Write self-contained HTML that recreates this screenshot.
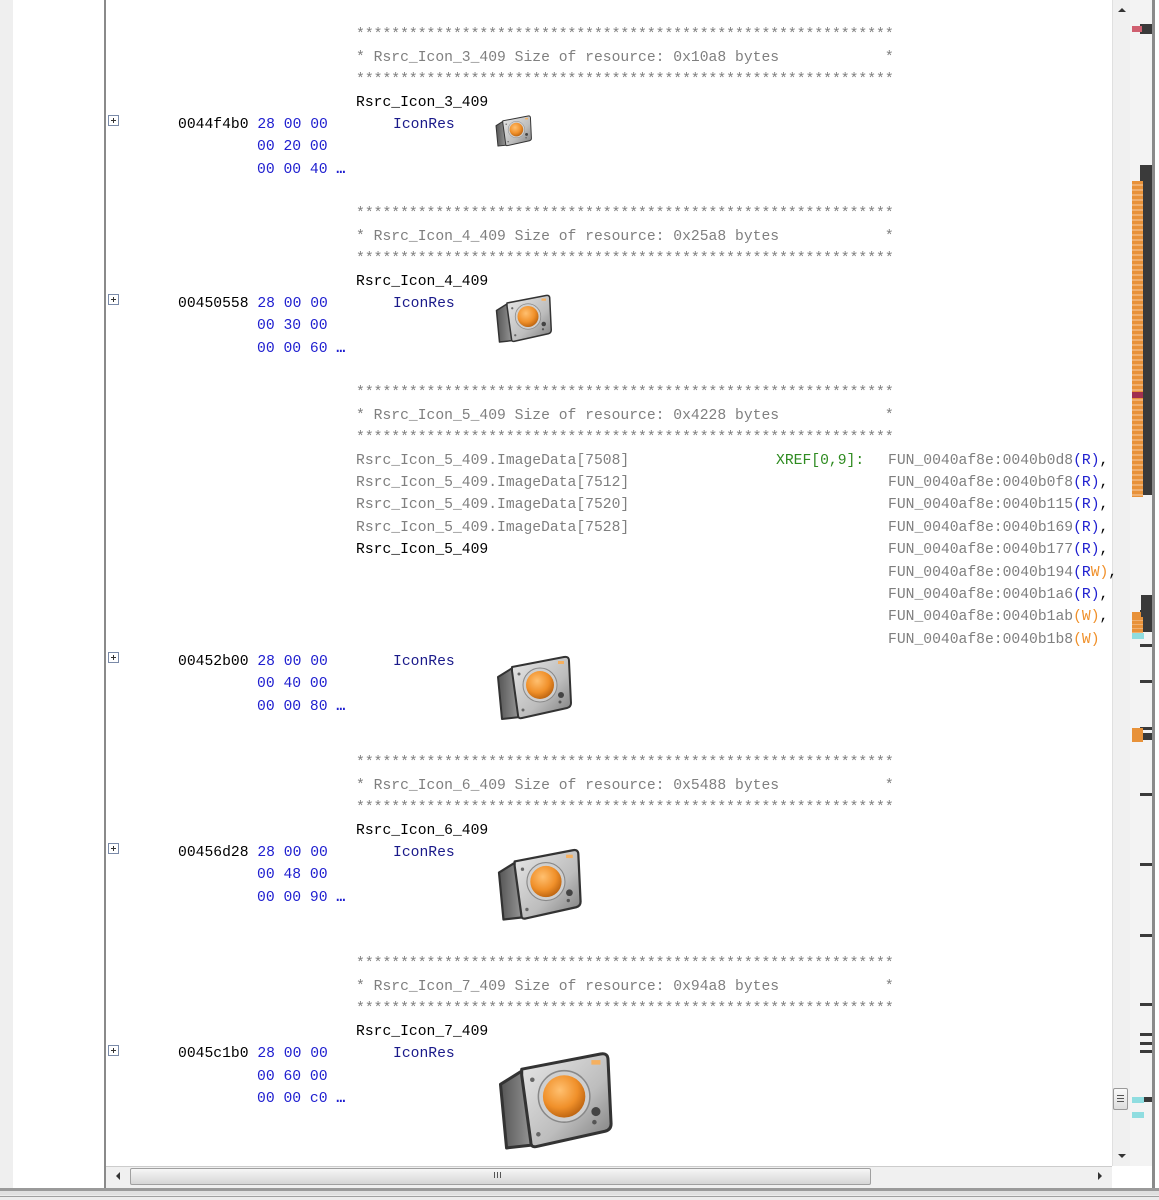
<!DOCTYPE html>
<html><head><meta charset="utf-8">
<style>
html,body{margin:0;padding:0;}
body{width:1159px;height:1200px;position:relative;overflow:hidden;background:#fff;font-family:"Liberation Mono",monospace;font-size:14.7px;}
.a{position:absolute;white-space:pre;line-height:18px;height:18px;margin-top:2px;}
.c{color:#7f7f7f}.k{color:#000}.b{color:#2020d0}.n{color:#1a1a8a}.g{color:#2e8b20}.r{color:#2020d0}.w{color:#f0902a}
.box{position:absolute;left:108px;width:9px;height:9px;border:1px solid #7a8aa8;background:#fff;}
.box:before{content:"";position:absolute;left:2px;top:4px;width:5px;height:1px;background:#333}
.box:after{content:"";position:absolute;left:4px;top:2px;width:1px;height:5px;background:#333}
.m{position:absolute;}
</style></head><body>
<svg width="0" height="0" style="position:absolute">
<defs>
<linearGradient id="bd" x1="0" y1="0" x2="1" y2="1"><stop offset="0" stop-color="#e8e8e8"/><stop offset="0.6" stop-color="#bdbdbd"/><stop offset="1" stop-color="#7a7a7a"/></linearGradient>
<linearGradient id="sd" x1="0" y1="0" x2="1" y2="0"><stop offset="0" stop-color="#555"/><stop offset="1" stop-color="#9a9a9a"/></linearGradient>
<radialGradient id="or" cx="0.4" cy="0.35" r="0.7"><stop offset="0" stop-color="#ffc070"/><stop offset="0.6" stop-color="#f0902a"/><stop offset="1" stop-color="#b8600e"/></radialGradient>
<symbol id="spk" viewBox="0 0 80 68">
<path d="M6 22 L22 12 L28 62 L10 64 Z" fill="url(#sd)" stroke="#333" stroke-width="2" stroke-linejoin="round"/>
<path d="M20 12 L72 2 Q77 1 77 6 L79 48 Q79 52 75 53 L30 63 Q26 64 26 60 L20 16 Z" fill="url(#bd)" stroke="#333" stroke-width="2" stroke-linejoin="round"/>
<circle cx="48" cy="30" r="17" fill="#cfcfcf" stroke="#888" stroke-width="1"/>
<circle cx="48" cy="30" r="14" fill="url(#or)"/>
<circle cx="69" cy="40" r="3" fill="#444"/>
<circle cx="68" cy="47" r="1.5" fill="#555"/>
<circle cx="27" cy="19" r="1.5" fill="#666"/>
<circle cx="31" cy="55" r="1.5" fill="#666"/>
<rect x="66" y="6" width="6" height="3" fill="#f5b060"/>
</symbol>
</defs></svg>

<!-- frame -->
<div class="m" style="left:0;top:0;width:13px;height:1188px;background:#efefef"></div>
<div class="m" style="left:104px;top:0;width:2px;height:1190px;background:#8a8a8a"></div>
<div class="m" style="left:1112px;top:0;width:18px;height:1166px;background:#f0f0f0;border-left:1px solid #e0e0e0"></div>
<div class="m" style="left:1118px;top:8px;width:0;height:0;border-left:4px solid transparent;border-right:4px solid transparent;border-bottom:4px solid #333"></div>
<div class="m" style="left:1118px;top:1154px;width:0;height:0;border-left:4px solid transparent;border-right:4px solid transparent;border-top:4px solid #333"></div>
<div class="m" style="left:1113px;top:1088px;width:15px;height:22px;background:linear-gradient(#fafafa,#ddd);border:1px solid #999;border-radius:2px;box-sizing:border-box"></div>
<div class="m" style="left:1117px;top:1095px;width:7px;height:1px;background:#555;box-shadow:0 3px #555,0 6px #555"></div>
<div class="m" style="left:1130px;top:0;width:22px;height:1166px;background:#f3f3f3"></div>
<div class="m" style="left:1152px;top:0;width:3px;height:1190px;background:#8a8a8a"></div>
<div class="m" style="left:1155px;top:0;width:4px;height:1190px;background:#fff"></div>
<!-- overview markers -->
<div class="m" style="left:1140px;top:24px;width:12px;height:10px;background:#3a3a3a"></div>
<div class="m" style="left:1132px;top:26px;width:10px;height:6px;background:#d06070"></div>
<div class="m" style="left:1140px;top:165px;width:12px;height:330px;background:#3a3a3a"></div>
<div class="m" style="left:1132px;top:181px;width:11px;height:316px;background:repeating-linear-gradient(#e8923a 0 3px,#f0b070 3px 5px)"></div>
<div class="m" style="left:1132px;top:392px;width:11px;height:6px;background:#a03050"></div>
<div class="m" style="left:1140px;top:610px;width:12px;height:4px;background:#3a3a3a"></div>
<div class="m" style="left:1132px;top:612px;width:11px;height:6px;background:#e8923a"></div>
<div class="m" style="left:1141px;top:595px;width:11px;height:37px;background:#3a3a3a"></div>
<div class="m" style="left:1132px;top:617px;width:11px;height:16px;background:repeating-linear-gradient(#e8923a 0 3px,#f0b070 3px 4px)"></div>
<div class="m" style="left:1132px;top:633px;width:12px;height:6px;background:#8fdde0"></div>
<div class="m" style="left:1140px;top:644px;width:12px;height:3px;background:#3a3a3a"></div>
<div class="m" style="left:1140px;top:680px;width:12px;height:3px;background:#3a3a3a"></div>
<div class="m" style="left:1140px;top:727px;width:12px;height:3px;background:#3a3a3a"></div>
<div class="m" style="left:1140px;top:733px;width:12px;height:7px;background:#3a3a3a"></div>
<div class="m" style="left:1132px;top:728px;width:11px;height:14px;background:#e8923a"></div>
<div class="m" style="left:1140px;top:793px;width:12px;height:3px;background:#3a3a3a"></div>
<div class="m" style="left:1140px;top:863px;width:12px;height:3px;background:#3a3a3a"></div>
<div class="m" style="left:1140px;top:934px;width:12px;height:3px;background:#3a3a3a"></div>
<div class="m" style="left:1140px;top:1003px;width:12px;height:3px;background:#3a3a3a"></div>
<div class="m" style="left:1140px;top:1033px;width:12px;height:3px;background:#3a3a3a"></div>
<div class="m" style="left:1140px;top:1042px;width:12px;height:3px;background:#3a3a3a"></div>
<div class="m" style="left:1140px;top:1050px;width:12px;height:3px;background:#3a3a3a"></div>
<div class="m" style="left:1132px;top:1097px;width:12px;height:6px;background:#8fdde0"></div>
<div class="m" style="left:1144px;top:1097px;width:8px;height:5px;background:#3a3a3a"></div>
<div class="m" style="left:1132px;top:1112px;width:12px;height:6px;background:#8fdde0"></div>
<!-- horizontal scrollbar -->
<div class="m" style="left:106px;top:1166px;width:1006px;height:22px;background:#f0f0f0;border-top:1px solid #ccc"></div>
<div class="m" style="left:116px;top:1172px;width:0;height:0;border-top:4px solid transparent;border-bottom:4px solid transparent;border-right:4px solid #333"></div>
<div class="m" style="left:1098px;top:1172px;width:0;height:0;border-top:4px solid transparent;border-bottom:4px solid transparent;border-left:4px solid #333"></div>
<div class="m" style="left:130px;top:1168px;width:741px;height:17px;background:linear-gradient(#f6f6f6,#d6d6d6);border:1px solid #a0a0a0;border-radius:2px;box-sizing:border-box"></div>
<div class="m" style="left:494px;top:1172px;width:1px;height:6px;background:#555;box-shadow:3px 0 #555,6px 0 #555"></div>
<div class="m" style="left:0;top:1188px;width:1159px;height:3px;background:#9a9a9a"></div>
<div class="m" style="left:0;top:1191px;width:1159px;height:9px;background:#ececec;border-top:4px solid #e0e0e0;box-sizing:border-box"></div>
<div class="m" style="left:0;top:1196px;width:1159px;height:1px;background:#a0a0a0"></div>

<!-- block 3 -->
<div class="a c" style="left:356px;top:24px">*************************************************************</div>
<div class="a c" style="left:356px;top:47px">* Rsrc_Icon_3_409 Size of resource: 0x10a8 bytes            *</div>
<div class="a c" style="left:356px;top:69px">*************************************************************</div>
<div class="a k" style="left:356px;top:92px">Rsrc_Icon_3_409</div>
<div class="box" style="top:115px"></div>
<div class="a k" style="left:178px;top:114px">0044f4b0 <span class="b">28 00 00</span></div>
<div class="a n" style="left:393px;top:114px">IconRes</div>
<div class="a b" style="left:257px;top:136px">00 20 00</div>
<div class="a b" style="left:257px;top:159px">00 00 40 <b>…</b></div>
<svg class="m" style="left:493px;top:115px" width="39" height="33"><use href="#spk"/></svg>

<!-- block 4 -->
<div class="a c" style="left:356px;top:203px">*************************************************************</div>
<div class="a c" style="left:356px;top:226px">* Rsrc_Icon_4_409 Size of resource: 0x25a8 bytes            *</div>
<div class="a c" style="left:356px;top:248px">*************************************************************</div>
<div class="a k" style="left:356px;top:271px">Rsrc_Icon_4_409</div>
<div class="box" style="top:294px"></div>
<div class="a k" style="left:178px;top:293px">00450558 <span class="b">28 00 00</span></div>
<div class="a n" style="left:393px;top:293px">IconRes</div>
<div class="a b" style="left:257px;top:315px">00 30 00</div>
<div class="a b" style="left:257px;top:338px">00 00 60 <b>…</b></div>
<svg class="m" style="left:492px;top:294px" width="60" height="51"><use href="#spk"/></svg>

<!-- block 5 -->
<div class="a c" style="left:356px;top:382px">*************************************************************</div>
<div class="a c" style="left:356px;top:405px">* Rsrc_Icon_5_409 Size of resource: 0x4228 bytes            *</div>
<div class="a c" style="left:356px;top:427px">*************************************************************</div>
<div class="a c" style="left:356px;top:450px">Rsrc_Icon_5_409.ImageData[7508]</div>
<div class="a c" style="left:356px;top:472px">Rsrc_Icon_5_409.ImageData[7512]</div>
<div class="a c" style="left:356px;top:494px">Rsrc_Icon_5_409.ImageData[7520]</div>
<div class="a c" style="left:356px;top:517px">Rsrc_Icon_5_409.ImageData[7528]</div>
<div class="a k" style="left:356px;top:539px">Rsrc_Icon_5_409</div>
<div class="a g" style="left:776px;top:450px">XREF[0,9]:</div>
<div class="a c" style="left:888px;top:450px">FUN_0040af8e:0040b0d8<span class="r">(R)</span><span class="k">,</span></div>
<div class="a c" style="left:888px;top:472px">FUN_0040af8e:0040b0f8<span class="r">(R)</span><span class="k">,</span></div>
<div class="a c" style="left:888px;top:494px">FUN_0040af8e:0040b115<span class="r">(R)</span><span class="k">,</span></div>
<div class="a c" style="left:888px;top:517px">FUN_0040af8e:0040b169<span class="r">(R)</span><span class="k">,</span></div>
<div class="a c" style="left:888px;top:539px">FUN_0040af8e:0040b177<span class="r">(R)</span><span class="k">,</span></div>
<div class="a c" style="left:888px;top:562px">FUN_0040af8e:0040b194<span class="r">(R</span><span class="w">W)</span><span class="k">,</span></div>
<div class="a c" style="left:888px;top:584px">FUN_0040af8e:0040b1a6<span class="r">(R)</span><span class="k">,</span></div>
<div class="a c" style="left:888px;top:606px">FUN_0040af8e:0040b1ab<span class="w">(W)</span><span class="k">,</span></div>
<div class="a c" style="left:888px;top:629px">FUN_0040af8e:0040b1b8<span class="w">(W)</span></div>
<div class="box" style="top:652px"></div>
<div class="a k" style="left:178px;top:651px">00452b00 <span class="b">28 00 00</span></div>
<div class="a n" style="left:393px;top:651px">IconRes</div>
<div class="a b" style="left:257px;top:673px">00 40 00</div>
<div class="a b" style="left:257px;top:696px">00 00 80 <b>…</b></div>
<svg class="m" style="left:492px;top:655px" width="80" height="68"><use href="#spk"/></svg>

<!-- block 6 -->
<div class="a c" style="left:356px;top:752px">*************************************************************</div>
<div class="a c" style="left:356px;top:775px">* Rsrc_Icon_6_409 Size of resource: 0x5488 bytes            *</div>
<div class="a c" style="left:356px;top:797px">*************************************************************</div>
<div class="a k" style="left:356px;top:820px">Rsrc_Icon_6_409</div>
<div class="box" style="top:843px"></div>
<div class="a k" style="left:178px;top:842px">00456d28 <span class="b">28 00 00</span></div>
<div class="a n" style="left:393px;top:842px">IconRes</div>
<div class="a b" style="left:257px;top:864px">00 48 00</div>
<div class="a b" style="left:257px;top:887px">00 00 90 <b>…</b></div>
<svg class="m" style="left:492px;top:848px" width="90" height="76"><use href="#spk"/></svg>

<!-- block 7 -->
<div class="a c" style="left:356px;top:953px">*************************************************************</div>
<div class="a c" style="left:356px;top:976px">* Rsrc_Icon_7_409 Size of resource: 0x94a8 bytes            *</div>
<div class="a c" style="left:356px;top:998px">*************************************************************</div>
<div class="a k" style="left:356px;top:1021px">Rsrc_Icon_7_409</div>
<div class="box" style="top:1045px"></div>
<div class="a k" style="left:178px;top:1043px">0045c1b0 <span class="b">28 00 00</span></div>
<div class="a n" style="left:393px;top:1043px">IconRes</div>
<div class="a b" style="left:257px;top:1066px">00 60 00</div>
<div class="a b" style="left:257px;top:1088px">00 00 c0 <b>…</b></div>
<svg class="m" style="left:491px;top:1051px" width="122" height="103"><use href="#spk"/></svg>
</body></html>
